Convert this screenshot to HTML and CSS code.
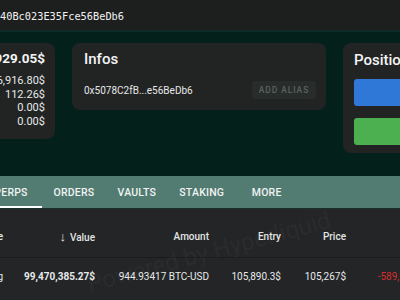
FILE: index.html
```html
<!DOCTYPE html>
<html>
<head>
<meta charset="utf-8">
<link rel="stylesheet" href="styles.css">
</head>
<body>
<div class="page">
  <header class="topbar"><span class="addr">40Bc023E35Fce56BeDb6</span></header>
  <section class="cards">
    <div class="card summary">
      <div class="big">99,487,929.05$</div>
      <div class="line">99,426,916.80$</div>
      <div class="line">112.26$</div>
      <div class="line">0.00$</div>
      <div class="line">0.00$</div>
    </div>
    <div class="card infos">
      <div class="title">Infos</div>
      <div class="inforow">
        <span class="short">0x5078C2fB...e56BeDb6</span>
        <button class="alias">ADD ALIAS</button>
      </div>
    </div>
    <div class="card position">
      <div class="title">Positions</div>
      <div class="bar blue"></div>
      <div class="bar green"></div>
    </div>
  </section>
  <nav class="tabs">
    <div class="tab active">PERPS</div>
    <div class="tab">ORDERS</div>
    <div class="tab">VAULTS</div>
    <div class="tab">STAKING</div>
    <div class="tab">MORE</div>
  </nav>
  <section class="table">
    <div class="row head">
      <div class="c c1">Side</div>
      <div class="c c2"><span class="arrow">&#8595;</span>Value</div>
      <div class="c c3">Amount</div>
      <div class="c c4">Entry</div>
      <div class="c c5">Price</div>
      <div class="c c6">PnL</div>
    </div>
    <div class="row body">
      <div class="c c1">Long</div>
      <div class="c c2 strong">99,470,385.27$</div>
      <div class="c c3">944.93417 BTC-USD</div>
      <div class="c c4">105,890.3$</div>
      <div class="c c5">105,267$</div>
      <div class="c c6 neg">-589,061.2$</div>
    </div>
    <div class="watermark">Powered by Hyperliquid</div>
  </section>
</div>
</body>
</html>
```
FILE: styles.css
```css
html, body {
  margin: 0;
  padding: 0;
  background: #03201b;
  overflow: hidden;
}
body {
  width: 400px;
  height: 300px;
  font-family: Roboto, "Liberation Sans", sans-serif;
  color: #e6e8e7;
}
.page {
  display: flex;
  flex-direction: column;
}
.topbar {
  height: 30px;
  background: #1d1e1e;
  border-bottom: 2px solid #0c2b26;
  display: flex;
  align-items: center;
}
.addr {
  font-family: "DejaVu Sans Mono", "Liberation Mono", monospace;
  font-size: 10.3px;
  color: #f2f2f2;
  padding-top: 1px;
}
.cards {
  display: flex;
  align-items: flex-start;
  gap: 17px;
  margin-top: 11px;
  margin-left: -95px;
}
.card {
  background: #222424;
  border-radius: 8px;
  box-sizing: border-box;
  flex: none;
}
.summary {
  width: 150px;
  height: 96px;
  padding: 7px 10px 0 0;
  text-align: right;
}
.big {
  font-size: 13.5px;
  line-height: 16px;
  font-weight: 700;
  white-space: nowrap;
  margin-bottom: 8px;
  color: #f4f4f4;
}
.line {
  font-size: 11px;
  line-height: 13.7px;
  white-space: nowrap;
}
.infos {
  width: 254px;
  height: 67px;
  padding: 7px 10px 0 12px;
}
.title {
  font-size: 15px;
  font-weight: 500;
  color: #f4f4f4;
}
.inforow {
  display: flex;
  justify-content: space-between;
  align-items: center;
  margin-top: 13px;
}
.short {
  font-size: 10px;
}
.alias {
  width: 64px;
  height: 18px;
  border: none;
  border-radius: 3px;
  background: #282d2b;
  color: #59625f;
  font-family: Roboto, "Liberation Sans", sans-serif;
  font-weight: 500;
  font-size: 8.5px;
  letter-spacing: 0.9px;
  padding: 0;
}
.position {
  width: 140px;
  height: 110px;
  padding: 8px 0 0 11px;
}
.position .title {
  margin-bottom: 10px;
  white-space: nowrap;
}
.bar {
  height: 27px;
  border-radius: 3px 0 0 3px;
}
.blue { background: #2f78d8; }
.green { background: #4caf50; margin-top: 12px; }
.tabs {
  margin-top: 23px;
  height: 32px;
  background: #527b71;
  display: flex;
  margin-left: -20px;
  border-bottom: 1px solid #1a2e2a;
}
.tab {
  min-width: 62px;
  padding: 0 11.5px;
  box-sizing: border-box;
  display: flex;
  align-items: center;
  justify-content: center;
  font-size: 10.5px;
  font-weight: 500;
  letter-spacing: 0.2px;
  color: #f0f3f2;
  white-space: nowrap;
}
.tab.active {
  box-shadow: inset 0 -2px 0 #ffffff;
}
.table {
  position: relative;
  background: #232526;
  height: 100px;
  overflow: hidden;
}
.row {
  display: flex;
  margin-left: -57px;
  white-space: nowrap;
  font-size: 10px;
}
.row.head {
  height: 49px;
  align-items: center;
  padding-top: 6px;
  box-sizing: border-box;
  border-bottom: 1px solid #1a1b1b;
  font-weight: 500;
  color: #e2e4e3;
}
.row.body {
  height: 30px;
  padding-top: 3px;
  box-sizing: content-box;
  align-items: center;
  color: #e8eaea;
}
.c {
  flex: none;
  text-align: right;
  box-sizing: border-box;
}
.c1 { width: 60px; }
.c2 { width: 92px; }
.c3 { width: 114px; }
.c4 { width: 72px; }
.c5 { width: 65px; }
.c6 { width: 84px; }
.arrow {
  font-size: 13px;
  margin-right: 4px;
  font-weight: 700;
}
.strong { font-weight: 700; }
.neg { color: #d32f2f; }
.watermark {
  position: absolute;
  left: 84px;
  top: 62px;
  font-size: 24px;
  color: rgba(255, 255, 255, 0.05);
  transform: rotate(-15deg);
  transform-origin: left top;
  white-space: nowrap;
  pointer-events: none;
}
```
